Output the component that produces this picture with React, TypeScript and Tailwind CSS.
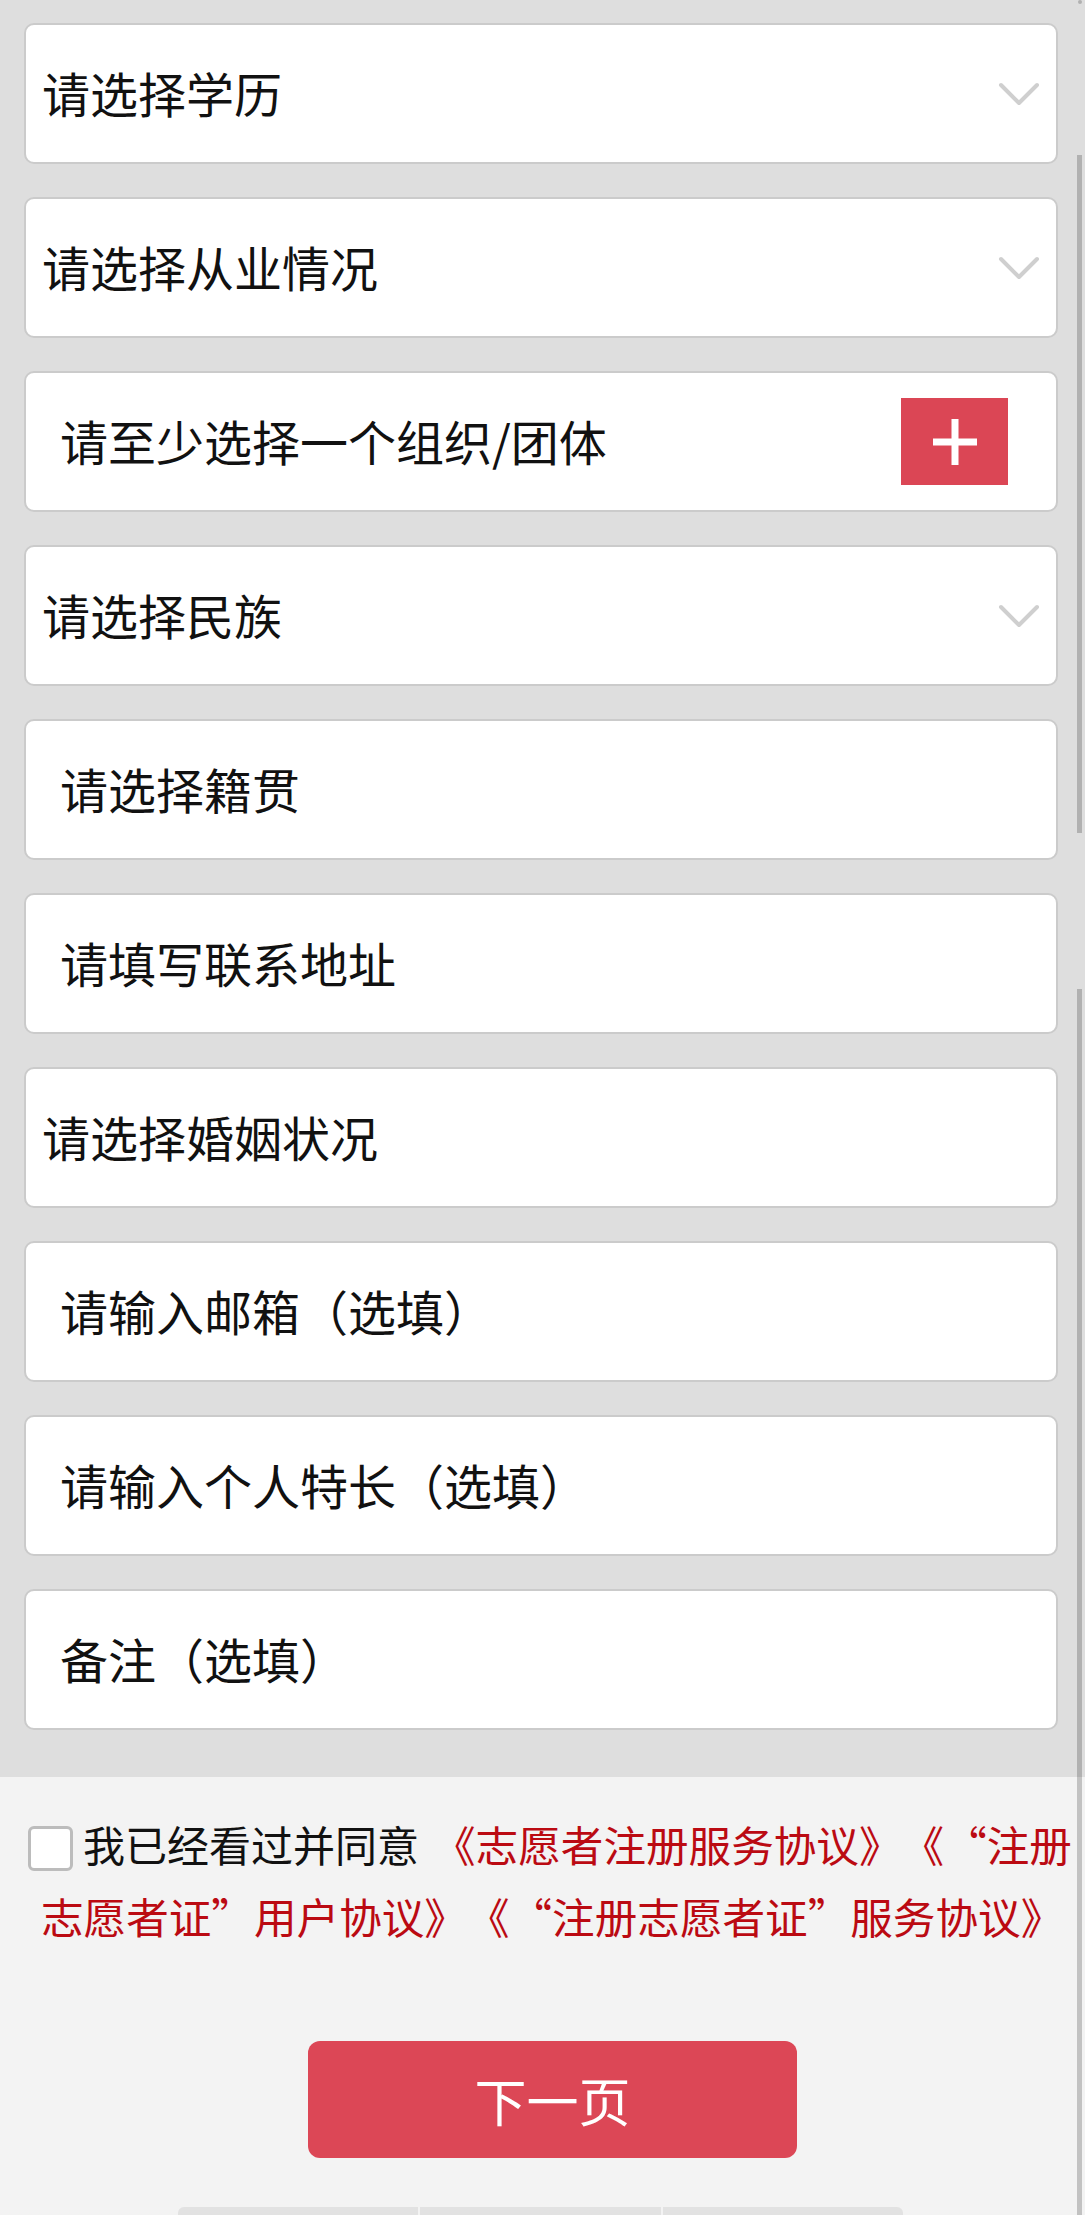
import React from 'react';

type Field = {
  label: string;
  kind: 'select' | 'input' | 'add' | 'plain';
};

const FIELDS: Field[] = [
  { label: '请选择学历', kind: 'select' },
  { label: '请选择从业情况', kind: 'select' },
  { label: '请至少选择一个组织/团体', kind: 'add' },
  { label: '请选择民族', kind: 'select' },
  { label: '请选择籍贯', kind: 'input' },
  { label: '请填写联系地址', kind: 'input' },
  { label: '请选择婚姻状况', kind: 'plain' },
  { label: '请输入邮箱（选填）', kind: 'input' },
  { label: '请输入个人特长（选填）', kind: 'input' },
  { label: '备注（选填）', kind: 'input' },
];

function Chevron() {
  return (
    <svg width="42" height="26" viewBox="0 0 42 26" className="shrink-0">
      <path
        d="M3 3 L21 21 L39 3"
        fill="none"
        stroke="#cfcfcf"
        strokeWidth="4"
        strokeLinecap="round"
        strokeLinejoin="round"
      />
    </svg>
  );
}

function FieldCard({ field }: { field: Field }) {
  const isInput = field.kind === 'input' || field.kind === 'add';

  return (
    <div className="flex h-[141px] items-center rounded-[10px] border-2 border-[#cbcbcb] bg-white">
      <span
        className={`flex-1 pb-[3px] text-[48px] leading-none text-[#111] ${isInput ? 'pl-[34px]' : 'pl-[16px]'}`}
      >
        {field.label}
      </span>
      {field.kind === 'select' && (
        <div className="mr-[16px] pt-[2px]">
          <Chevron />
        </div>
      )}
      {field.kind === 'add' && (
        <button className="mr-[48px] flex h-[87px] w-[107px] items-center justify-center bg-[#db4655]">
          <svg width="44" height="46" viewBox="0 0 44 46">
            <rect x="0" y="19.5" width="44" height="7" fill="#fff" />
            <rect x="18.5" y="0" width="7" height="46" fill="#fff" />
          </svg>
        </button>
      )}
    </div>
  );
}

export default function App() {
  return (
    <div className="relative h-[2215px] w-[1085px] overflow-hidden bg-[#f3f3f3] font-['Noto_Sans_CJK_SC',sans-serif]">
      {/* form fields */}
      <div className="flex flex-col gap-[33px] bg-[#dedede] pb-[47px] pl-[24px] pr-[27px] pt-[23px]">
        {FIELDS.map((f) => (
          <FieldCard key={f.label} field={f} />
        ))}
      </div>

      {/* agreement */}
      <div className="pl-[41px] pr-[8px] pt-[31px]">
        <p className="text-[42px] leading-[72px] text-[#111] [text-spacing-trim:space-all]">
          <span className="relative top-[-2px] mr-[10px] ml-[-13px] inline-block h-[45px] w-[45px] rounded-[6px] border-[3px] border-[#bcbcbc] bg-white align-middle" />
          我已经看过并同意
          <span className="ml-[14px] text-[42.6px] text-[#bb0a12]">
            《志愿者注册服务协议》《“注册志愿者证”用户协议》《“注册志愿者证”服务协议》
          </span>
        </p>
      </div>

      {/* next */}
      <div className="pl-[308px] pt-[89px]">
        <button className="flex h-[117px] w-[489px] items-center justify-center rounded-[12px] bg-[#dc4756] text-[52px] text-white">
          下一页
        </button>
      </div>

      {/* bottom tabs, mostly off screen */}
      <div className="ml-[178px] mt-[49px] flex w-[725px] gap-[2px]">
        <div className="h-[40px] flex-1 rounded-tl-[6px] bg-[#e2e2e2]" />
        <div className="h-[40px] flex-1 bg-[#e2e2e2]" />
        <div className="h-[40px] flex-1 rounded-tr-[6px] bg-[#e2e2e2]" />
      </div>

      {/* scrollbars */}
      <div className="absolute left-[1078px] top-0 h-[4px] w-[4px] rounded-full bg-black/20" />
      <div className="absolute left-[1077px] top-[155px] h-[678px] w-[5px] bg-black/20" />
      <div className="absolute left-[1077px] top-[989px] h-[1226px] w-[5px] bg-black/20" />
    </div>
  );
}
